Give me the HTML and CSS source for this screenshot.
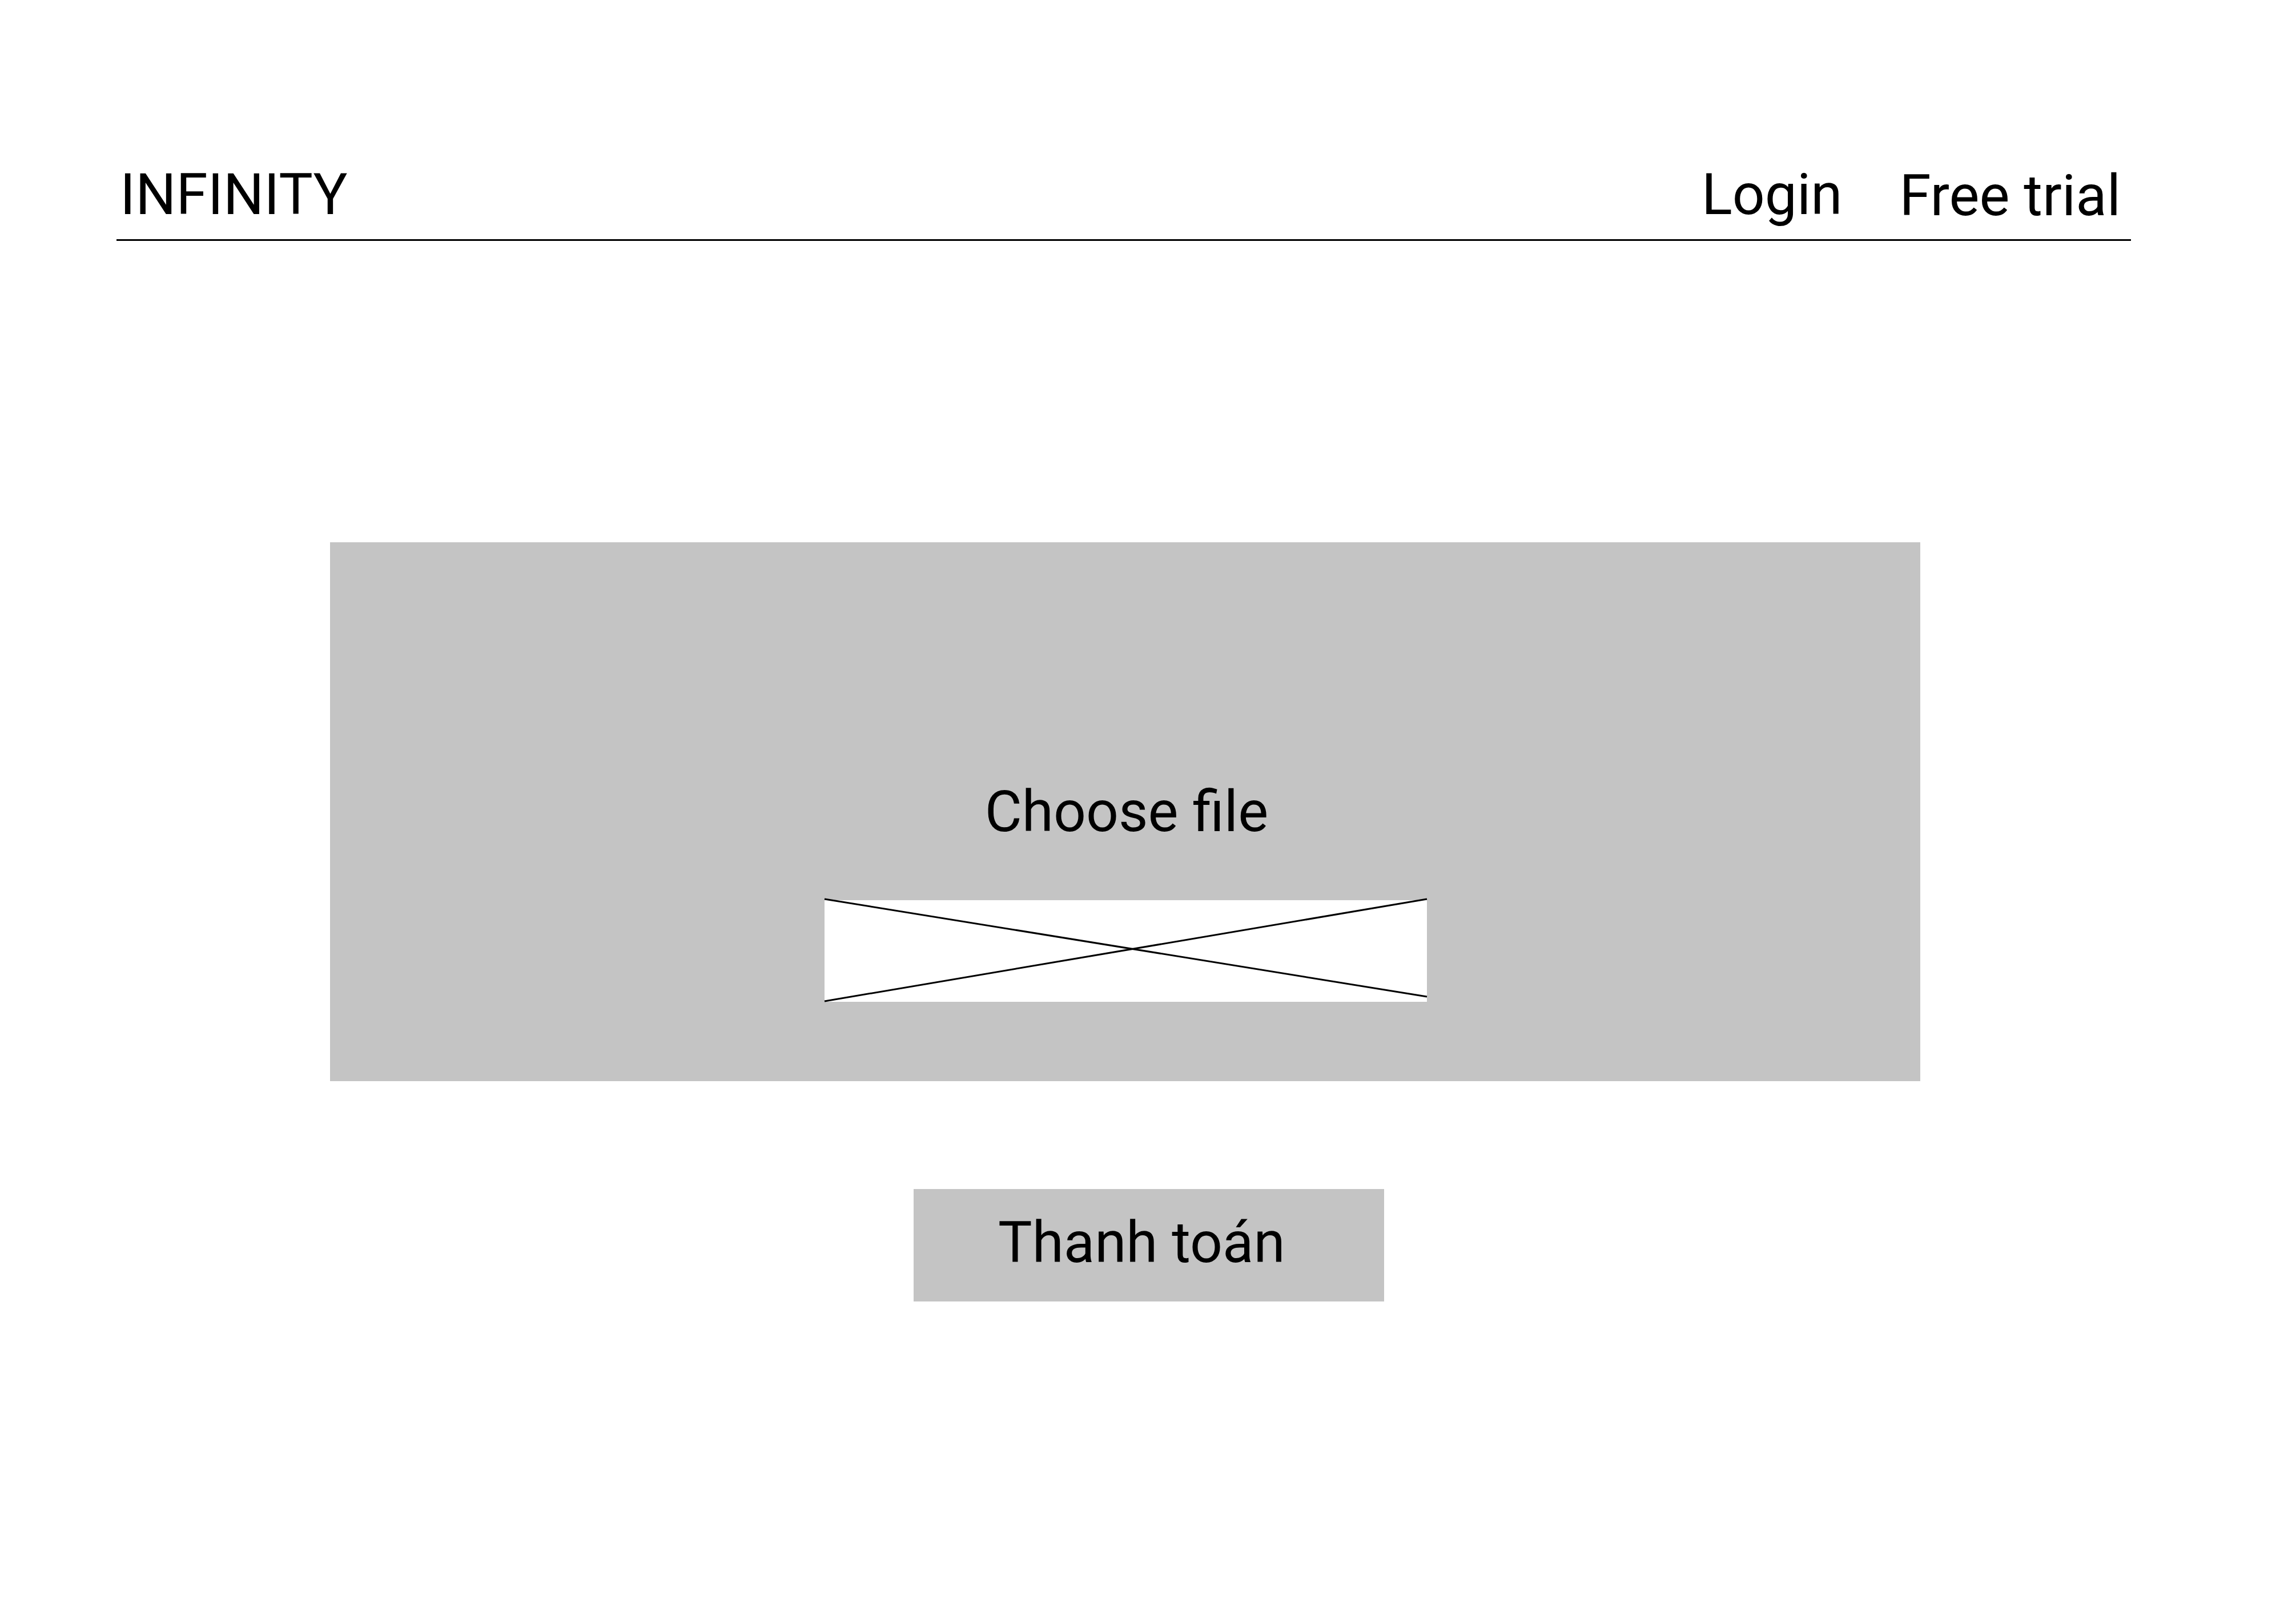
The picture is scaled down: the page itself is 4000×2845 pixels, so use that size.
FILE: index.html
```html
<!DOCTYPE html>
<html lang="vi">
<head>
<meta charset="utf-8">
<title>INFINITY</title>
<link rel="stylesheet" href="styles.css">
</head>
<body>
<div class="page">
  <header class="header">
    <div class="brand">INFINITY</div>
    <nav class="nav">
      <a class="nav-link" href="#">Login</a>
      <a class="nav-link trial" href="#">Free trial</a>
    </nav>
  </header>
  <main class="main">
    <section class="upload">
      <div class="upload-label">Choose file</div>
      <div class="placeholder">
        <svg class="placeholder-x" width="1055" height="178" viewBox="0 0 1055 178">
          <line x1="0" y1="-2" x2="1055" y2="169" />
          <line x1="0" y1="177" x2="1055" y2="-2" />
        </svg>
      </div>
    </section>
    <button class="pay-btn" type="button">Thanh toán</button>
  </main>
</div>
</body>
</html>
```

FILE: styles.css
```css
html, body {
  margin: 0;
  padding: 0;
  background: #ffffff;
}

body {
  width: 4000px;
  height: 2845px;
  font-family: Roboto, "Liberation Sans", Arial, sans-serif;
  color: #000000;
}

.page {
  margin-left: 204px;
  width: 3528px;
}

.header {
  display: flex;
  justify-content: space-between;
  align-items: baseline;
  padding: 281px 18px 18px 6px;
  border-bottom: 3px solid #000000;
  font-size: 100px;
  line-height: 120px;
}

.brand {
  font-weight: 400;
}

.nav {
  display: flex;
  align-items: baseline;
  gap: 100px;
}

.nav-link {
  color: #000000;
  text-decoration: none;
}

.trial {
  position: relative;
  top: 2px;
}

.main {
  display: flex;
  flex-direction: column;
  align-items: center;
}

.upload {
  margin-top: 528px;
  margin-left: 5px;
  width: 2785px;
  height: 944px;
  box-sizing: border-box;
  padding-top: 412px;
  background: #c4c4c4;
  display: flex;
  flex-direction: column;
  align-items: center;
}

.upload-label {
  font-size: 100px;
  line-height: 120px;
  margin-left: 5px;
}

.placeholder {
  margin-top: 95px;
  margin-left: 2px;
  width: 1055px;
  height: 178px;
  background: #ffffff;
}

.placeholder-x {
  display: block;
  overflow: visible;
}

.placeholder-x line {
  stroke: #000000;
  stroke-width: 3;
}

.pay-btn {
  margin-top: 189px;
  margin-left: 88px;
  width: 824px;
  height: 197px;
  box-sizing: border-box;
  padding: 34px 0 43px 148px;
  border: none;
  background: #c4c4c4;
  font-family: Roboto, "Liberation Sans", Arial, sans-serif;
  font-size: 100px;
  line-height: 120px;
  color: #000000;
  text-align: left;
}
```
